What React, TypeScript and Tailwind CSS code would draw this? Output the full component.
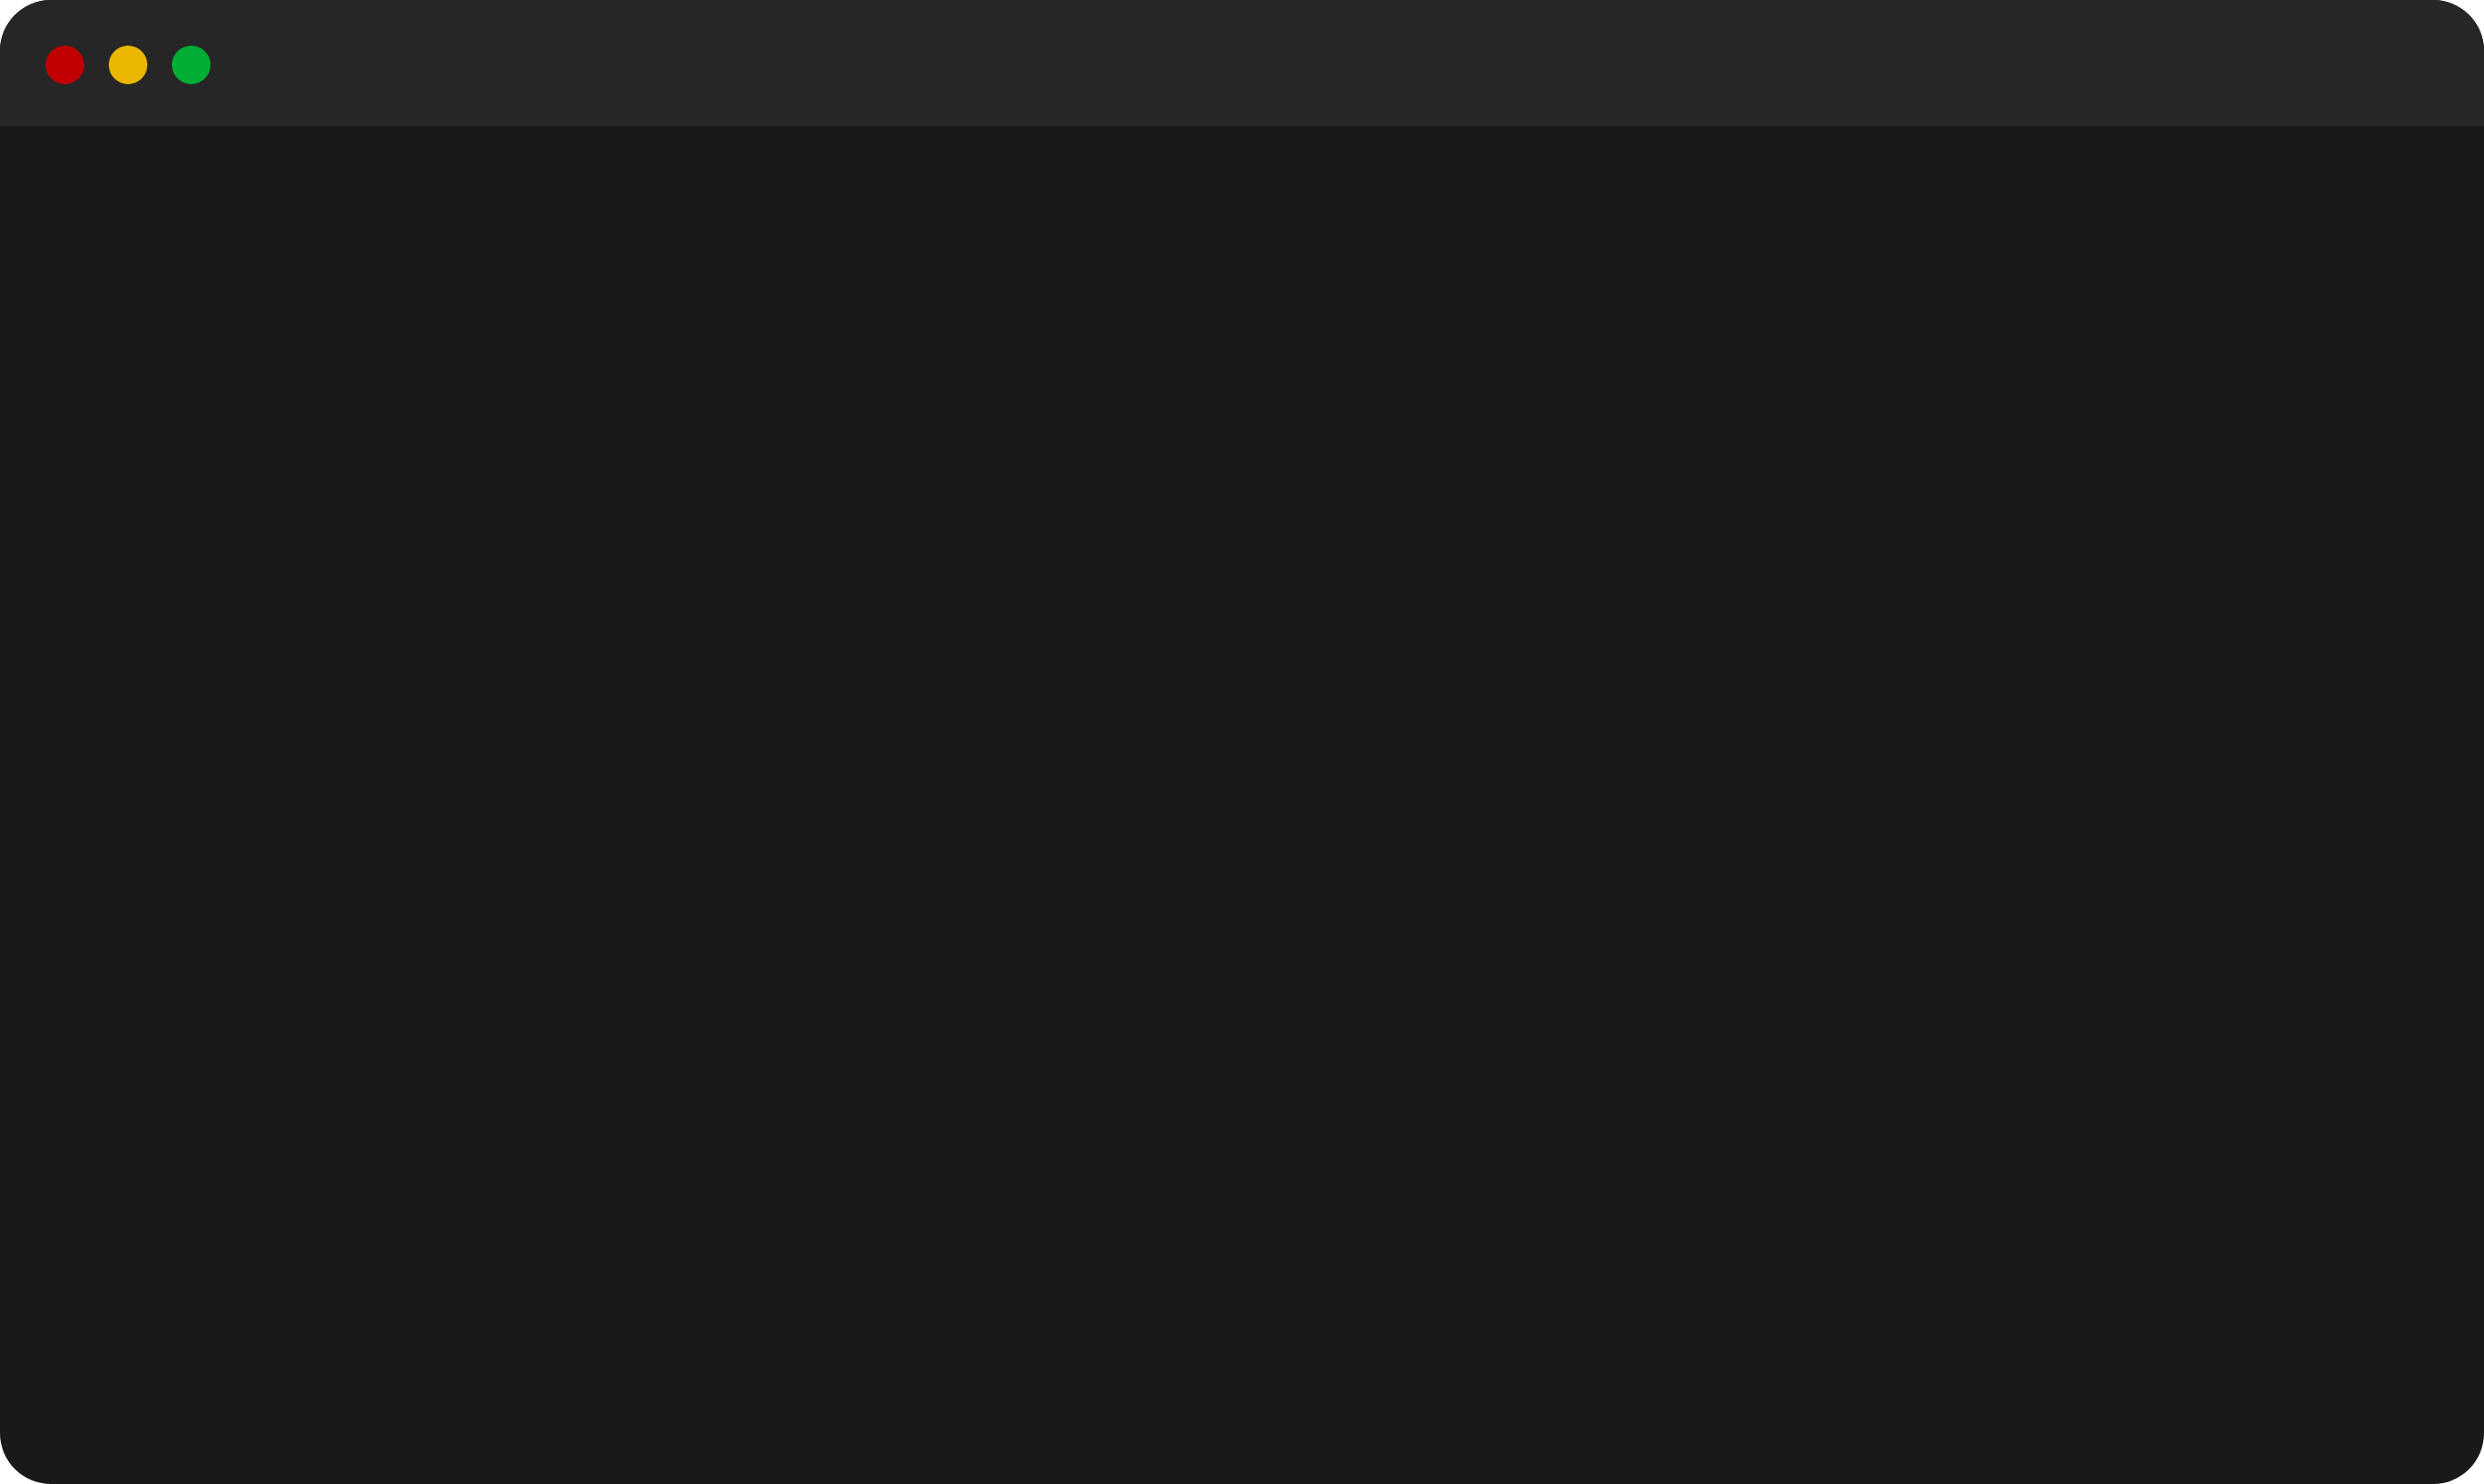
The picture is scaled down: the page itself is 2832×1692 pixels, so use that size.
export default function App() {
  return (
    <div className="w-[2832px] h-[1692px] bg-white">
      <div className="w-full h-full rounded-[58px] overflow-hidden flex flex-col bg-[#191919]">
        <div className="h-[144px] bg-[#262626] flex items-start pt-[52px] pl-[52px] gap-[28px] shrink-0">
          <div className="w-[44px] h-[44px] rounded-full bg-[#c00000]" />
          <div className="w-[44px] h-[44px] rounded-full bg-[#ebb600]" />
          <div className="w-[44px] h-[44px] rounded-full bg-[#00ad35]" />
        </div>
        <div className="flex-1" />
      </div>
    </div>
  );
}
